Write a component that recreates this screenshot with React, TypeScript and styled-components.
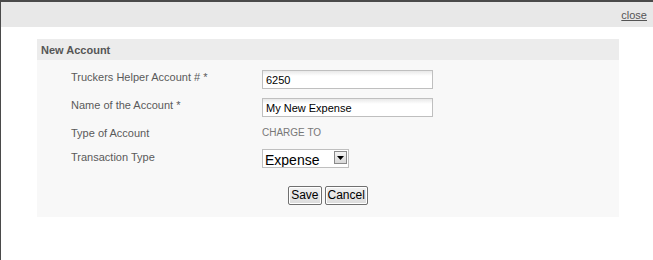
import React from "react"
import styled, { createGlobalStyle } from "styled-components"

const Global = createGlobalStyle`
  html, body {
    margin: 0;
    padding: 0;
    background: #ffffff;
  }
  body {
    font-family: "Liberation Sans", Arial, sans-serif;
  }
`

const Window = styled.div`
  width: 653px;
  height: 260px;
  box-sizing: border-box;
  border-top: 2px solid #4a4a4a;
  border-left: 1px solid #4a4a4a;
  background: #ffffff;
  overflow: hidden;
`

const TitleBar = styled.div`
  height: 25px;
  background: #e8e8e8;
  display: flex;
  align-items: center;
  justify-content: flex-end;
  padding-right: 6px;
`

const CloseLink = styled.a`
  font-size: 11px;
  color: #555555;
  text-decoration: underline;
  cursor: pointer;
  margin-top: 1px;
`

const Panel = styled.div`
  margin: 12px 0 0 36px;
  width: 582px;
  background: #f8f8f8;
  padding-bottom: 12px;
`

const PanelHeader = styled.div`
  height: 21px;
  background: #ececec;
  display: flex;
  align-items: center;
  padding-left: 4px;
  font-size: 11px;
  font-weight: bold;
  color: #555555;
`

const Form = styled.div`
  display: grid;
  grid-template-columns: 191px 1fr;
  padding: 10px 0 0 34px;
`

const Label = styled.div<{ $h: number; $pt?: number }>`
  height: ${(p) => p.$h}px;
  padding-top: ${(p) => p.$pt || 0}px;
  box-sizing: border-box;
  font-size: 11px;
  line-height: 14px;
  color: #5a5a5a;
`

const Cell = styled.div<{ $h: number }>`
  height: ${(p) => p.$h}px;
`

const TextInput = styled.input`
  box-sizing: border-box;
  width: 171px;
  height: 19px;
  margin: 0;
  padding: 1px 3px 0;
  border: 1px solid #bfbfbf;
  background: linear-gradient(#e9e9e9, #ffffff 5px);
  font-family: "Liberation Sans", Arial, sans-serif;
  font-size: 11px;
  color: #000000;
  outline: none;
  caret-color: #000;
`

const Static = styled.div`
  font-size: 10px;
  line-height: 14px;
  color: #777777;
`

const SelectWrap = styled.span`
  position: relative;
  display: inline-block;
  width: 87px;
  height: 19px;
`

const Select = styled.select`
  appearance: none;
  box-sizing: border-box;
  width: 87px;
  height: 19px;
  margin: 0;
  padding: 2px 0 0 2px;
  border: 1px solid #bfbfbf;
  background: #ffffff;
  font-family: "Liberation Sans", Arial, sans-serif;
  font-size: 14px;
  line-height: 17px;
  color: #000000;
  outline: none;
`

const ArrowBox = styled.span`
  position: absolute;
  right: 2px;
  top: 2px;
  width: 13px;
  height: 13px;
  box-sizing: border-box;
  border: 1px solid #8a8a8a;
  background: linear-gradient(#f4f4f4, #d8d8d8);
  display: flex;
  align-items: center;
  justify-content: center;
  pointer-events: none;
`

const Actions = styled.div`
  display: flex;
  justify-content: center;
  gap: 3px;
  margin-top: 18px;
`

const Button = styled.button`
  height: 19px;
  padding: 0 2px;
  border: 1px solid #707070;
  border-radius: 2px;
  background: linear-gradient(#f2f2f2, #dcdcdc);
  box-shadow: inset 0 0 0 1px #ffffff;
  font-family: "Liberation Sans", Arial, sans-serif;
  font-size: 12px;
  color: #000000;
  line-height: 15px;
`

export default function App() {
  return (
    <>
      <Global />
      <Window>
        <TitleBar>
          <CloseLink>close</CloseLink>
        </TitleBar>
        <Panel>
          <PanelHeader>New Account</PanelHeader>
          <Form>
            <Label $h={28}>Truckers Helper Account # *</Label>
            <Cell $h={28}>
              <TextInput defaultValue="6250" />
            </Cell>
            <Label $h={28}>Name of the Account *</Label>
            <Cell $h={28}>
              <TextInput defaultValue="My New Expense" autoFocus />
            </Cell>
            <Label $h={23}>Type of Account</Label>
            <Cell $h={23}>
              <Static>CHARGE TO</Static>
            </Cell>
            <Label $h={19} $pt={1}>
              Transaction Type
            </Label>
            <Cell $h={19}>
              <SelectWrap>
                <Select defaultValue="Expense">
                  <option>Expense</option>
                  <option>Income</option>
                </Select>
                <ArrowBox>
                  <svg width="7" height="4" viewBox="0 0 7 4">
                    <path d="M0 0h7L3.5 4z" fill="#000" />
                  </svg>
                </ArrowBox>
              </SelectWrap>
            </Cell>
          </Form>
          <Actions>
            <Button>Save</Button>
            <Button>Cancel</Button>
          </Actions>
        </Panel>
      </Window>
    </>
  )
}
